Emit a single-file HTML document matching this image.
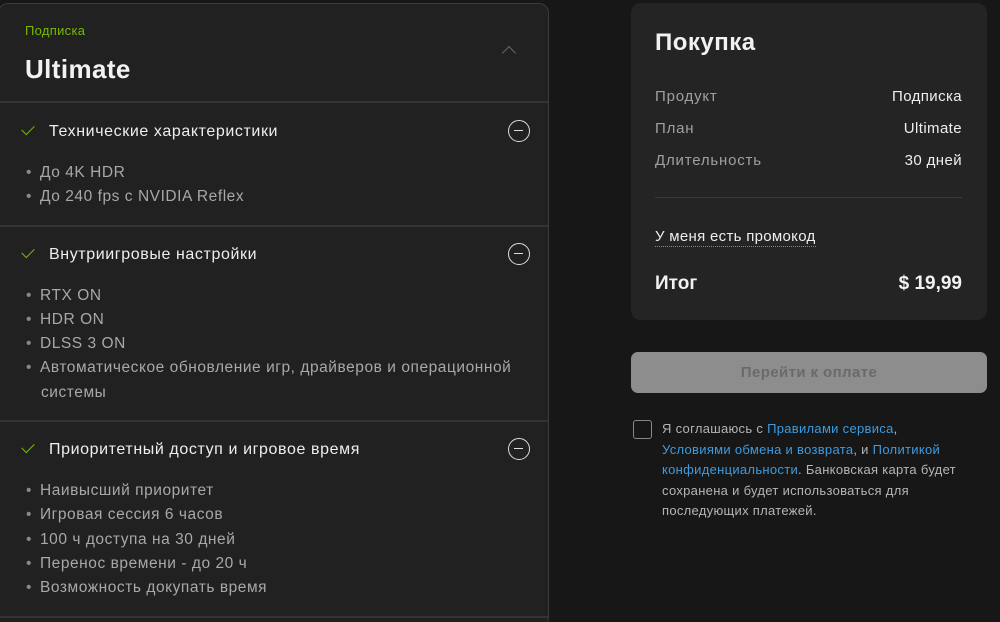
<!DOCTYPE html>
<html><head><meta charset="utf-8"><style>
*{margin:0;padding:0;box-sizing:border-box}
html,body{width:1000px;height:622px;overflow:hidden}
body{background:#171717;font-family:"Liberation Sans","Noto Sans CJK SC",sans-serif;position:relative;color:#eee}
.a{position:absolute;white-space:nowrap}
.card{position:absolute;left:-2px;top:3px;width:551px;height:625px;background:#212121;border:1px solid #3a3a3a;border-radius:10px}
.hr{position:absolute;left:0;width:548px;height:2px;background:#333}
.h{font-size:16px;letter-spacing:0.6px;color:#eee;margin-top:1px}
.li{font-size:15.5px;letter-spacing:0.55px;color:#a8a8a8;margin-top:1px}
.li:before{content:"•";margin-right:8px;color:#888}
.chk{position:absolute;left:22px;width:12px;height:7px;border-left:1.5px solid #76b900;border-bottom:1.5px solid #76b900;transform:rotate(-45deg)}
.min{position:absolute;left:508px;width:22px;height:22px;border:1.5px solid #ddd;border-radius:50%}
.min:after{content:"";position:absolute;left:5px;top:9px;width:9px;height:1.3px;background:#ddd}
.r{position:absolute;left:631px;top:3px;width:356px;height:317px;background:#242424;border-radius:10px}
.lab{font-size:15px;letter-spacing:0.8px;color:#a0a0a0;margin-top:1px}
.val{font-size:15px;letter-spacing:0.4px;color:#eee;text-align:right;right:38px;margin-top:1px}
.lnk{color:#3d9be0}
</style></head><body>
<div class="card"></div>
<div class="a" style="left:25px;top:23px;font-size:13px;letter-spacing:0.3px;color:#76b900">Подписка</div>
<div class="a" style="left:25px;top:54px;font-size:26px;letter-spacing:0.4px;font-weight:bold;color:#f2f2f2">Ultimate</div>
<div class="a" style="left:504px;top:48px;width:10px;height:10px;border-left:1.5px solid #666;border-top:1.5px solid #666;transform:rotate(45deg)"></div>
<div class="hr" style="top:101px"></div>

<div class="chk" style="top:125px"></div>
<div class="a h" style="left:49px;top:122px">Технические характеристики</div>
<div class="min" style="top:120px"></div>
<div class="a li" style="left:26px;top:163px">До 4K HDR</div>
<div class="a li" style="left:26px;top:187px">До 240 fps с NVIDIA Reflex</div>
<div class="hr" style="top:225px"></div>

<div class="chk" style="top:248px"></div>
<div class="a h" style="left:49px;top:245px">Внутриигровые настройки</div>
<div class="min" style="top:243px"></div>
<div class="a li" style="left:26px;top:286px">RTX ON</div>
<div class="a li" style="left:26px;top:310px">HDR ON</div>
<div class="a li" style="left:26px;top:334px">DLSS 3 ON</div>
<div class="a li" style="left:26px;top:358px">Автоматическое обновление игр, драйверов и операционной</div>
<div class="a" style="left:41px;top:384px;font-size:15.5px;letter-spacing:0.55px;color:#a8a8a8">системы</div>
<div class="hr" style="top:420px"></div>

<div class="chk" style="top:443px"></div>
<div class="a h" style="left:49px;top:440px">Приоритетный доступ и игровое время</div>
<div class="min" style="top:438px"></div>
<div class="a li" style="left:26px;top:481px">Наивысший приоритет</div>
<div class="a li" style="left:26px;top:505px">Игровая сессия 6 часов</div>
<div class="a li" style="left:26px;top:530px">100 ч доступа на 30 дней</div>
<div class="a li" style="left:26px;top:554px">Перенос времени - до 20 ч</div>
<div class="a li" style="left:26px;top:578px">Возможность докупать время</div>
<div class="hr" style="top:616px"></div>

<div class="r"></div>
<div class="a" style="left:655px;top:29px;font-size:24px;letter-spacing:0.5px;font-weight:bold;color:#f2f2f2">Покупка</div>
<div class="a lab" style="left:655px;top:87px">Продукт</div><div class="a val" style="top:87px">Подписка</div>
<div class="a lab" style="left:655px;top:119px">План</div><div class="a val" style="top:119px">Ultimate</div>
<div class="a lab" style="left:655px;top:151px">Длительность</div><div class="a val" style="top:151px">30 дней</div>
<div class="a" style="left:655px;top:197px;width:307px;height:1px;background:#3a3a3a"></div>
<div class="a" style="left:655px;top:228px;font-size:15px;letter-spacing:0.3px;color:#eee;border-bottom:1px dotted #888;padding-bottom:1px">У меня есть промокод</div>
<div class="a" style="left:655px;top:273px;font-size:19px;font-weight:bold;color:#f2f2f2">Итог</div>
<div class="a" style="right:38px;top:273px;font-size:19px;font-weight:bold;color:#f2f2f2">$ 19,99</div>

<div class="a" style="left:631px;top:352px;width:356px;height:41px;background:#8d8d8d;border-radius:7px;text-align:center;line-height:41px;font-size:15px;letter-spacing:0.4px;font-weight:bold;color:#6a6a6a">Перейти к оплате</div>
<div class="a" style="left:633px;top:420px;width:19px;height:19px;border:1.5px solid #888;border-radius:3px"></div>
<div class="a" style="left:662px;top:419px;font-size:13px;letter-spacing:0.3px;line-height:20.5px;color:#b5b5b5">Я соглашаюсь с <span class="lnk">Правилами сервиса</span>,<br><span class="lnk">Условиями обмена и возврата</span>, и <span class="lnk">Политикой</span><br><span class="lnk">конфиденциальности</span>. Банковская карта будет<br>сохранена и будет использоваться для<br>последующих платежей.</div>
</body></html>
